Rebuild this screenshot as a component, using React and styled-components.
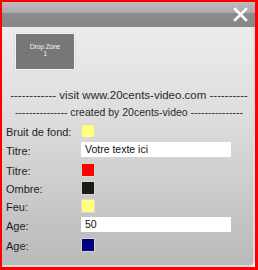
import React from 'react'
import styled, { createGlobalStyle } from 'styled-components'

const GlobalStyle = createGlobalStyle`
    html, body {
        margin: 0;
        padding: 0;
        background: #ffffff;
    }
    * {
        box-sizing: border-box;
    }
`
const Frame = styled.div`
    width: 258px;
    height: 270px;
    border-style: solid;
    border-color: #ff0000;
    border-width: 2px 3px 3px 2px;
    display: flex;
    flex-direction: column;
    font-family: "Liberation Sans", Arial, sans-serif;
    color: #1e1e1e;
    overflow: hidden;
`
const Header = styled.div`
    height: 25px;
    flex-shrink: 0;
    display: flex;
    justify-content: flex-end;
    align-items: center;
    padding-right: 7px;
    background: linear-gradient(#bcbcbc 0%, #a9a9a9 44%, #8c8c8c 46%, #868686 100%);
`
const Close = styled.svg`
    width: 15px;
    height: 15px;
    display: block;
`
const Panel = styled.div`
    flex: 1;
    display: flex;
    flex-direction: column;
    background: linear-gradient(#ececec 0%, #dcdcdc 40%, #b9b9b9 100%);
    border-right: 2px solid #dcdcdc;
    border-bottom: 2px solid #dcdcdc;
    border-bottom-right-radius: 6px;
    padding: 6px 0 0 4px;
`
const DropZone = styled.div`
    width: 60px;
    height: 37px;
    margin-left: 9px;
    background: #777777;
    border: 1.5px solid #f4f4f4;
    box-shadow: 0 0 1px rgba(0, 0, 0, 0.25);
    color: #eeeeee;
    font-size: 7px;
    line-height: 7px;
    letter-spacing: -0.3px;
    text-align: center;
    display: flex;
    flex-direction: column;
    justify-content: center;
    padding-bottom: 4px;
`
const Banner = styled.div`
    white-space: nowrap;
    overflow: hidden;
    text-align: center;
    font-size: ${p => p.$size}px;
    line-height: 17px;
    margin-top: ${p => p.$top}px;
    color: #2a2a2a;
    width: 246px;
`
const Form = styled.div`
    display: flex;
    flex-direction: column;
    gap: 4px;
    margin-top: 3px;
`
const Row = styled.div`
    display: flex;
    align-items: center;
    margin-bottom: ${p => (p.$input ? 2 : 0)}px;
`
const Label = styled.div`
    width: 75px;
    flex-shrink: 0;
    font-size: 11px;
    line-height: 12px;
    padding-top: 2px;
`
const Swatch = styled.div`
    width: 14px;
    height: 14px;
    background: ${p => p.$color};
    border: 1px solid #d8d8c8;
`
const Field = styled.div`
    width: 150px;
    height: 15px;
    background: #ffffff;
    font-size: 10.5px;
    line-height: 15px;
    padding-left: 4px;
    color: #111111;
`

const rows = [
    { label: 'Bruit de fond:', color: '#ffff80' },
    { label: 'Titre:', value: 'Votre texte ici' },
    { label: 'Titre:', color: '#ff0000' },
    { label: 'Ombre:', color: '#1b1b1b' },
    { label: 'Feu:', color: '#ffff80' },
    { label: 'Age:', value: '50' },
    { label: 'Age:', color: '#000080' },
]

const App = () => {
  return (
    <>
      <GlobalStyle />
      <Frame>
        <Header>
          <Close viewBox="0 0 15 15">
            <path d="M2 2 L13 13 M13 2 L2 13" stroke="#ffffff" strokeWidth="2.6" strokeLinecap="square" />
          </Close>
        </Header>
        <Panel>
          <DropZone>
            <span>Drop Zone</span>
            <span>1</span>
          </DropZone>
          <Banner $size={11.5} $top={17}>------------ visit www.20cents-video.com ----------</Banner>
          <Banner $size={10.5} $top={0}>--------------- created by 20cents-video ---------------</Banner>
          <Form>
            {rows.map((r, i) => (
              <Row key={i} $input={!!r.value}>
                <Label>{r.label}</Label>
                {r.value !== undefined ? <Field>{r.value}</Field> : <Swatch $color={r.color} />}
              </Row>
            ))}
          </Form>
        </Panel>
      </Frame>
    </>
  )
}

export default App
